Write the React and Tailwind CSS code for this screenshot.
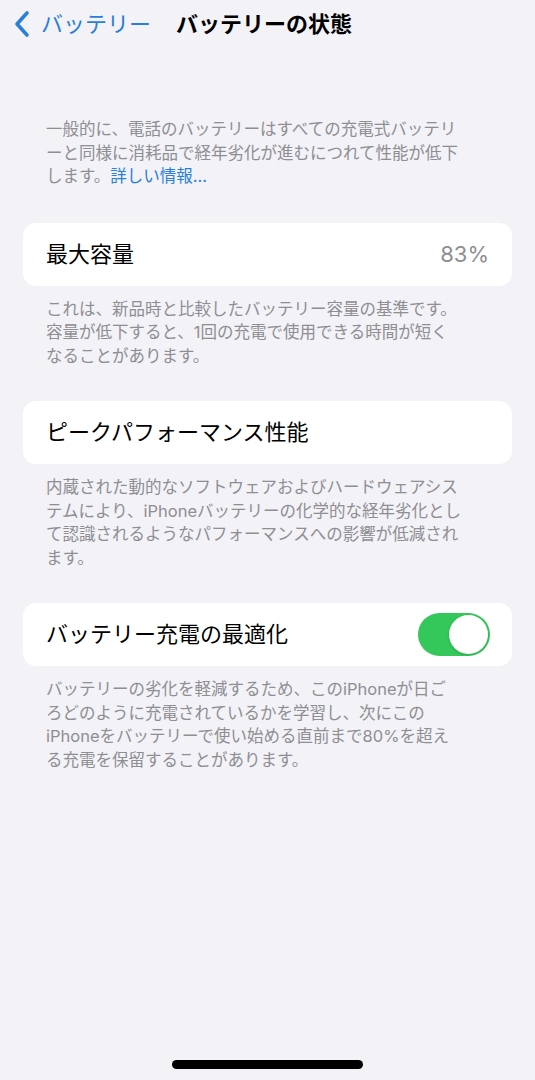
const fontStack = { fontFamily: 'Inter, "Noto Sans CJK JP", "Noto Sans", sans-serif' };

function Footnote({ lines }) {
  return (
    <p className="mt-[12px] px-[46px] text-[16.5px] leading-[23.5px] text-[#8e8e93]">
      {lines.map((l, i) => (
        <span key={i} className="block whitespace-nowrap">{l}</span>
      ))}
    </p>
  )
}

function Cell({ children }) {
  return (
    <div className="mx-[23px] h-[63px] rounded-[13px] bg-white flex items-center justify-between pl-[23px] pr-[23px] text-[22px] text-black">
      {children}
    </div>
  )
}

function Toggle() {
  return (
    <div className="w-[72px] h-[43px] rounded-full bg-[#34c759] p-[2px] flex justify-end -mr-[1px]">
      <div className="w-[39px] h-[39px] rounded-full bg-white shadow-[0_1px_3px_rgba(0,0,0,0.15)]"></div>
    </div>
  )
}

export default function App() {
  return (
    <div style={fontStack} className="min-h-[1080px] bg-[#f2f2f7] flex flex-col">
      <div className="h-[48px] flex items-center pl-[12px]">
        <svg width="20" height="28" viewBox="0 0 20 28" fill="none">
          <polyline points="15,3 5,14 15,25" stroke="#2a7fd8" strokeWidth="3.6" strokeLinecap="round" strokeLinejoin="round" />
        </svg>
        <span className="ml-[9px] text-[22px] text-[#2a7fd8]">バッテリー</span>
        <span className="ml-[25px] text-[22px] font-bold text-black">バッテリーの状態</span>
      </div>

      <p className="mt-[70px] px-[46px] text-[16.5px] leading-[23.5px] text-[#8e8e93]">
        <span className="block whitespace-nowrap">一般的に、電話のバッテリーはすべての充電式バッテリ</span>
        <span className="block whitespace-nowrap">ーと同様に消耗品で経年劣化が進むにつれて性能が低下</span>
        <span className="block whitespace-nowrap">します。<span className="text-[#2a7fd8]">詳しい情報...</span></span>
      </p>

      <div className="mt-[34px]">
        <Cell>
          <span>最大容量</span>
          <span className="text-[#8e8e93]">83%</span>
        </Cell>
      </div>
      <Footnote lines={[
        "これは、新品時と比較したバッテリー容量の基準です。",
        "容量が低下すると、1回の充電で使用できる時間が短く",
        "なることがあります。",
      ]} />

      <div className="mt-[33px]">
        <Cell>
          <span>ピークパフォーマンス性能</span>
        </Cell>
      </div>
      <Footnote lines={[
        "内蔵された動的なソフトウェアおよびハードウェアシス",
        "テムにより、iPhoneバッテリーの化学的な経年劣化とし",
        "て認識されるようなパフォーマンスへの影響が低減され",
        "ます。",
      ]} />

      <div className="mt-[33px]">
        <Cell>
          <span>バッテリー充電の最適化</span>
          <Toggle />
        </Cell>
      </div>
      <Footnote lines={[
        "バッテリーの劣化を軽減するため、このiPhoneが日ご",
        "ろどのように充電されているかを学習し、次にこの",
        "iPhoneをバッテリーで使い始める直前まで80%を超え",
        "る充電を保留することがあります。",
      ]} />

      <div className="mt-auto mb-[11px] self-center w-[191px] h-[9px] rounded-full bg-black"></div>
    </div>
  )
}
